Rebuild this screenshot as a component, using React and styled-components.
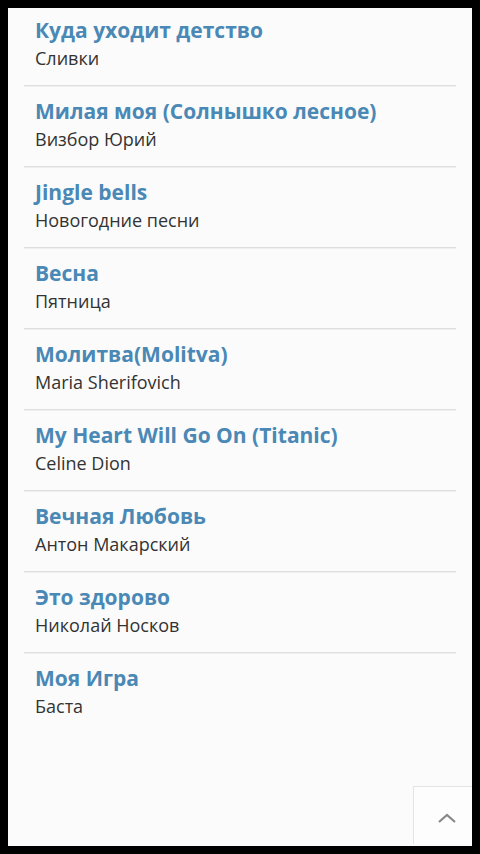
import React from 'react';
import styled, { createGlobalStyle } from 'styled-components';

const GlobalStyle = createGlobalStyle`
    html, body {
        margin: 0;
        padding: 0;
        background: #000;
    }
    body {
        font-family: "Open Sans", "Noto Sans", sans-serif;
    }
`;

const Frame = styled.div`
    height: 854px;
    padding: 8px;
    box-sizing: border-box;
    display: flex;
`;

const Page = styled.div`
    flex: 1;
    position: relative;
    background: #fbfbfb;
    height: 838px;
    overflow: hidden;
`;

const List = styled.ul`
    list-style: none;
    margin: 0;
    padding: 0 16px;
`;

const Item = styled.li`
    padding: 11px 11px 13px;
    border-bottom: 1px solid #dedede;
    box-shadow: 0 1px 0 #efefef;
    &:first-child {
        padding-top: 8px;
    }
    &:last-child {
        border-bottom: none;
        box-shadow: none;
    }
`;

const Title = styled.div`
    font-size: 21px;
    line-height: 28px;
    font-weight: 700;
    color: #4a88b5;
    white-space: nowrap;
`;

const Artist = styled.div`
    font-size: 18px;
    line-height: 28px;
    color: #333;
`;

const ScrollTop = styled.button`
    position: absolute;
    right: 0;
    bottom: 2px;
    width: 59px;
    height: 58px;
    padding: 4px 0 0 8px;
    box-sizing: border-box;
    background: #fdfdfd;
    border: none;
    border-left: 1px solid #e4e4e4;
    border-top: 1px solid #e4e4e4;
    display: flex;
    align-items: center;
    justify-content: center;
    & > svg {
        width: 22px;
        height: 12px;
    }
`;

const songs = [
    ['Куда уходит детство', 'Сливки'],
    ['Милая моя (Солнышко лесное)', 'Визбор Юрий'],
    ['Jingle bells', 'Новогодние песни'],
    ['Весна', 'Пятница'],
    ['Молитва(Molitva)', 'Maria Sherifovich'],
    ['My Heart Will Go On (Titanic)', 'Celine Dion'],
    ['Вечная Любовь', 'Антон Макарский'],
    ['Это здорово', 'Николай Носков'],
    ['Моя Игра', 'Баста'],
];

function App() {
    return (
        <Frame>
            <GlobalStyle />
            <Page>
                <List>
                    {songs.map(([title, artist]) => (
                        <Item key={title}>
                            <Title>{title}</Title>
                            <Artist>{artist}</Artist>
                        </Item>
                    ))}
                </List>
                <ScrollTop aria-label="Наверх">
                    <svg viewBox="0 0 22 12">
                        <polyline points="3,10 11,3 19,10" fill="none" stroke="#888" strokeWidth="2.2" />
                    </svg>
                </ScrollTop>
            </Page>
        </Frame>
    );
}

export default App;
